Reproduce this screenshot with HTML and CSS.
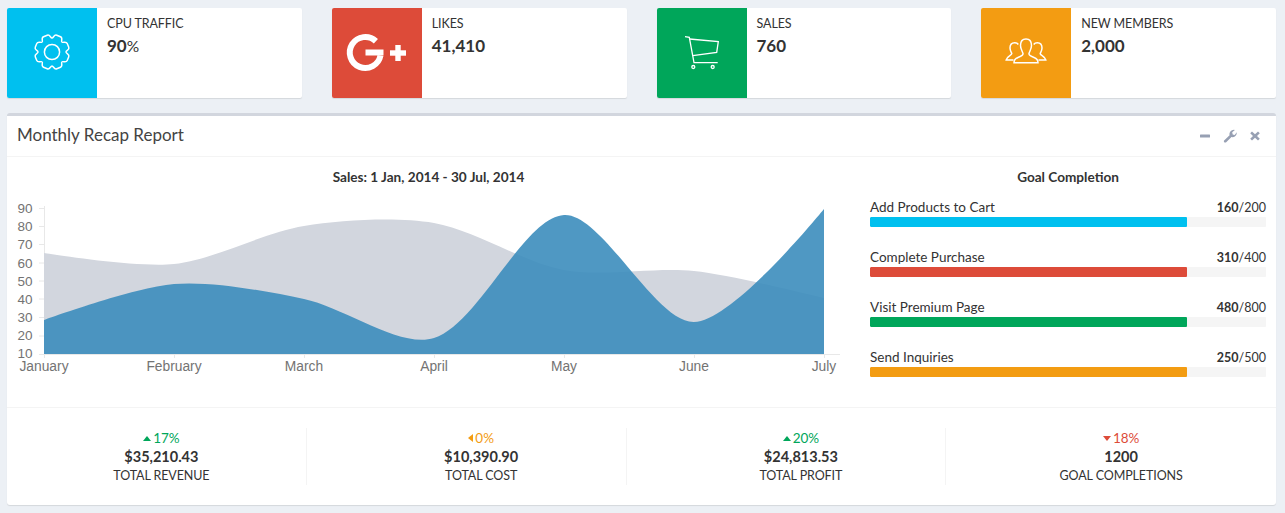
FILE: index.html
```html
<!DOCTYPE html>
<html lang="en">
<head>
<meta charset="utf-8">
<title>Dashboard</title>
<link rel="stylesheet" href="styles.css">
</head>
<body>
<section class="info-row">
  <div class="info-box">
    <div class="info-icon bg-cyan">
      <svg viewBox="0 0 90 90" class="glyph">
        <g transform="translate(45 44)" class="line gear">
          <path id="tooth" d="M-5.36,-12.93 C-3.9,-13.6 -5,-17.3 -2,-17.3 L2,-17.3 C5,-17.3 3.9,-13.6 5.36,-12.93" transform="rotate(22.5)"/>
          <use href="#tooth" transform="rotate(45)"/>
          <use href="#tooth" transform="rotate(90)"/>
          <use href="#tooth" transform="rotate(135)"/>
          <use href="#tooth" transform="rotate(180)"/>
          <use href="#tooth" transform="rotate(225)"/>
          <use href="#tooth" transform="rotate(270)"/>
          <use href="#tooth" transform="rotate(315)"/>
          <circle r="7.6"/>
        </g>
      </svg>
    </div>
    <div class="info-content"><span class="info-label">CPU TRAFFIC</span><span class="info-num">90<small>%</small></span></div>
  </div>
  <div class="info-box">
    <div class="info-icon bg-red">
      <svg viewBox="0 0 90 90" class="glyph">
        <path class="g-arc" d="M43.9,33.2 A15.5,15.5 0 1 0 48.5,47.5"/>
        <rect class="solid" x="33.5" y="41.5" width="18" height="6"/>
        <rect class="solid" x="58" y="42.3" width="16" height="5.4"/>
        <rect class="solid" x="63.3" y="37" width="5.4" height="16"/>
      </svg>
    </div>
    <div class="info-content"><span class="info-label">LIKES</span><span class="info-num">41,410</span></div>
  </div>
  <div class="info-box">
    <div class="info-icon bg-green">
      <svg viewBox="0 0 90 90" class="glyph">
        <g class="line">
          <path d="M28,28.7 L32.3,29.3 L37,54.7 H60.7"/>
          <path d="M32.5,31 L61.3,33.7 L59.7,44.3 L35.7,47.7"/>
          <circle cx="36.3" cy="59" r="1.5"/>
          <circle cx="55.7" cy="59" r="1.5"/>
        </g>
      </svg>
    </div>
    <div class="info-content"><span class="info-label">SALES</span><span class="info-num">760</span></div>
  </div>
  <div class="info-box">
    <div class="info-icon bg-orange">
      <svg viewBox="0 0 90 90" class="glyph">
        <g class="line people">
          <path d="M45,31 C41,31 39.5,33.5 39.5,37.5 C39.5,41 41.5,43.5 42,45.5 C42.3,47.5 40,48.3 37,49.5 C34.5,50.5 33,52 33,54.7 H57 C57,52 55.5,50.5 53,49.5 C50,48.3 47.7,47.5 48,45.5 C48.5,43.5 50.5,41 50.5,37.5 C50.5,33.5 49,31 45,31Z"/>
          <path d="M37.3,36.5 C36.5,35.3 35,34.7 33.6,34.7 C30.5,34.7 29,37 29,40 C29,42.5 30.3,44.3 30.8,45.5 C31,47.5 26,48 25.2,52 H32.5"/>
          <path d="M52.7,36.5 C53.5,35.3 55,34.7 56.4,34.7 C59.5,34.7 61,37 61,40 C61,42.5 59.7,44.3 59.2,45.5 C59,47.5 64,48 64.8,52 H57.5"/>
        </g>
      </svg>
    </div>
    <div class="info-content"><span class="info-label">NEW MEMBERS</span><span class="info-num">2,000</span></div>
  </div>
</section>

<section class="panel">
  <header class="panel-head">
    <h3 class="panel-title">Monthly Recap Report</h3>
    <div class="tools">
      <svg class="tool" viewBox="0 0 14 14"><rect x="2" y="5.5" width="10" height="3" rx=".5"/></svg>
      <svg class="tool" viewBox="0 0 14 14"><path d="M1.6,13.4 C0.8,12.9 0.6,12.1 1.1,11.5 L6.6,6.2 C5.9,4 7.4,0.9 10.9,0.7 L11.9,1 L9.2,3.3 L9.7,5.4 L11.7,5.9 L13.7,3.3 C14.1,6.6 11.3,8.6 8.5,8.1 L3.2,13.3 C2.7,13.7 2.1,13.7 1.6,13.4Z"/></svg>
      <svg class="tool" viewBox="0 0 14 14"><path d="M4,2.5 L7,5.3 L10,2.5 L11.8,4.3 L9,7 L11.8,9.8 L10,11.6 L7,8.8 L4,11.6 L2.2,9.8 L5,7 L2.2,4.3Z"/></svg>
    </div>
  </header>

  <div class="panel-body">
    <div class="chart-col">
      <p class="col-title">Sales: 1 Jan, 2014 - 30 Jul, 2014</p>
      <svg class="chart" viewBox="17 187 823 190">
        <path class="grid" d="M44.5,206 V354.5 M39,208.5 H44 M39,226.5 H44 M39,244.5 H44 M39,263 H44 M39,281 H44 M39,299 H44 M39,317.5 H44 M39,336 H44 M39,354.5 H840 M44.5,354 V358 M174.5,354 V358 M304.5,354 V358 M434.5,354 V358 M564.5,354 V358 M694.5,354 V358 M824.5,354 V358"/>
        <path class="area-gray" d="M44,253 C44,253 135.7,268 174,264 C213.7,259.9 264.2,232.3 304,226 C342.2,220 396.2,216.6 434,223 C474.2,229.8 523.8,262.6 564,270 C601.8,277 655.4,266.8 694,271 C733.4,275.2 824,298 824,298 V354 H44Z"/>
        <path class="area-blue" d="M44,320 C44,320 134.4,287.2 174,284 C212.4,280.9 265.7,291 304,299 C343.7,307.2 400.4,348.9 434,338 C478.4,323.7 523.8,217.5 564,215 C601.8,212.7 655.4,322.9 694,322 C733.4,321.1 824,209 824,209 V354 H44Z"/>
        <g class="y-labels">
          <text x="32.5" y="213">90</text><text x="32.5" y="231">80</text><text x="32.5" y="249">70</text><text x="32.5" y="268">60</text><text x="32.5" y="286">50</text><text x="32.5" y="304">40</text><text x="32.5" y="322">30</text><text x="32.5" y="340">20</text><text x="32.5" y="358">10</text>
        </g>
        <g class="x-labels">
          <text x="44" y="371">January</text><text x="174" y="371">February</text><text x="304" y="371">March</text><text x="434" y="371">April</text><text x="564" y="371">May</text><text x="694" y="371">June</text><text x="824" y="371">July</text>
        </g>
      </svg>
    </div>
    <div class="goal-col">
      <p class="col-title">Goal Completion</p>
      <div class="goal">
        <div class="goal-text"><span>Add Products to Cart</span><span class="goal-val"><b>160</b>/200</span></div>
        <div class="track"><div class="fill bg-cyan"></div></div>
      </div>
      <div class="goal">
        <div class="goal-text"><span>Complete Purchase</span><span class="goal-val"><b>310</b>/400</span></div>
        <div class="track"><div class="fill bg-red"></div></div>
      </div>
      <div class="goal">
        <div class="goal-text"><span>Visit Premium Page</span><span class="goal-val"><b>480</b>/800</span></div>
        <div class="track"><div class="fill bg-green"></div></div>
      </div>
      <div class="goal">
        <div class="goal-text"><span>Send Inquiries</span><span class="goal-val"><b>250</b>/500</span></div>
        <div class="track"><div class="fill bg-orange"></div></div>
      </div>
    </div>
  </div>

  <footer class="panel-foot">
    <div class="stat">
      <span class="pct up"><i class="caret caret-up"></i>17%</span>
      <strong class="amount">$35,210.43</strong>
      <span class="stat-label">TOTAL REVENUE</span>
    </div>
    <div class="stat">
      <span class="pct flat"><i class="caret caret-left"></i>0%</span>
      <strong class="amount">$10,390.90</strong>
      <span class="stat-label">TOTAL COST</span>
    </div>
    <div class="stat">
      <span class="pct up"><i class="caret caret-up"></i>20%</span>
      <strong class="amount">$24,813.53</strong>
      <span class="stat-label">TOTAL PROFIT</span>
    </div>
    <div class="stat">
      <span class="pct down"><i class="caret caret-down"></i>18%</span>
      <strong class="amount">1200</strong>
      <span class="stat-label">GOAL COMPLETIONS</span>
    </div>
  </footer>
</section>
</body>
</html>
```
FILE: styles.css
```css
* { box-sizing: border-box; }
html, body { height: 513px; overflow: hidden; }
body {
  margin: 0;
  padding: 8px 9px 0 7px;
  background: #ecf0f5;
  color: #333;
  font-family: "Lato", "Noto Sans", sans-serif;
  font-size: 13.5px;
}
.bg-cyan { background: #00c0ef; }
.bg-red { background: #dd4b39; }
.bg-green { background: #00a65a; }
.bg-orange { background: #f39c12; }

.info-row {
  display: grid;
  grid-template-columns: repeat(4, 1fr);
  column-gap: 30px;
  margin-bottom: 15px;
}
.info-box {
  display: flex;
  height: 90px;
  background: #fff;
  border-radius: 2px;
  box-shadow: 0 1px 1px rgba(0,0,0,.1);
  overflow: hidden;
}
.info-icon { flex: 0 0 90px; height: 90px; }
.glyph { display: block; width: 90px; height: 90px; }
.line { fill: none; stroke: #fff; stroke-width: 1.3; }
.gear, .people { stroke-width: 1.5; }
.solid { fill: #fff; }
.g-arc { fill: none; stroke: #fff; stroke-width: 6; }
.info-content { padding: 6px 10px 5px; display: flex; flex-direction: column; }
.info-label { line-height: 20px; height: 20px; font-size: 12.5px; letter-spacing: -.1px; }
.info-num { margin-top: 2px; line-height: 20px; font-size: 17px; font-weight: 700; }
.info-num small { font-size: 15.5px; font-weight: 400; }

.panel {
  height: 392px;
  background: #fff;
  border-top: 3px solid #d2d6de;
  border-radius: 3px;
  box-shadow: 0 1px 1px rgba(0,0,0,.1);
}
.panel-head {
  display: flex;
  justify-content: space-between;
  align-items: center;
  height: 41px;
  padding: 0 10px;
  border-bottom: 1px solid #f4f4f4;
}
.panel-title { margin: 0 0 4px; font-size: 17px; font-weight: 400; color: #444; }
.tools { display: flex; gap: 11px; padding-right: 4px; }
.tool { display: block; width: 14px; height: 14px; fill: #97a0b3; }

.panel-body {
  display: grid;
  grid-template-columns: 823px 396px;
  column-gap: 30px;
  padding: 10px 10px 30px;
  height: 251px;
  border-bottom: 1px solid #f4f4f4;
}
.col-title { margin: 0; text-align: center; line-height: 20px; font-size: 13.6px; font-weight: 700; }
.chart { display: block; width: 823px; height: 190px; }
.grid { fill: none; stroke: #e8e8e8; stroke-width: 1; }
.area-gray { fill: #d2d6de; }
.area-blue { fill: rgba(60,141,188,.9); }
.y-labels text, .x-labels text { font-family: "Liberation Sans", Arial, sans-serif; fill: #737373; }
.y-labels text { text-anchor: end; font-size: 13.5px; }
.x-labels text { text-anchor: middle; font-size: 13.8px; }

.goal { margin-top: 10px; margin-bottom: 20px; }
.goal-text { display: flex; justify-content: space-between; align-items: baseline; line-height: 20px; height: 20px; font-size: 13.5px; }
.goal-val { font-size: 12.5px; }
.goal-val b { font-weight: 700; }
.track { height: 10px; background: #f5f5f5; border-radius: 1px; overflow: hidden; }
.fill { width: 80%; height: 100%; border-radius: 1px; }

.panel-foot {
  display: grid;
  grid-template-columns: repeat(4, 1fr);
  column-gap: 30px;
  padding: 20px 10px 0;
}
.stat {
  display: flex;
  flex-direction: column;
  align-items: center;
  height: 57px;
  border-right: 1px solid #f4f4f4;
}
.stat:last-child { border-right: 0; }
.pct { display: flex; align-items: center; gap: 2px; line-height: 20px; height: 20px; font-size: 13.5px; }
.up { color: #00a65a; }
.flat { color: #f39c12; }
.down { color: #dd4b39; }
.caret { display: block; width: 0; height: 0; border-style: solid; }
.caret-up { border-width: 0 4.5px 5px; border-color: transparent transparent #00a65a; }
.caret-down { border-width: 5px 4.5px 0; border-color: #dd4b39 transparent transparent; }
.caret-left { border-width: 4.5px 5px 4.5px 0; border-color: transparent #f39c12 transparent transparent; }
.amount { line-height: 18px; font-size: 14.5px; font-weight: 700; }
.stat-label { margin-top: 1px; line-height: 18px; font-size: 12.5px; letter-spacing: -.1px; }
```
